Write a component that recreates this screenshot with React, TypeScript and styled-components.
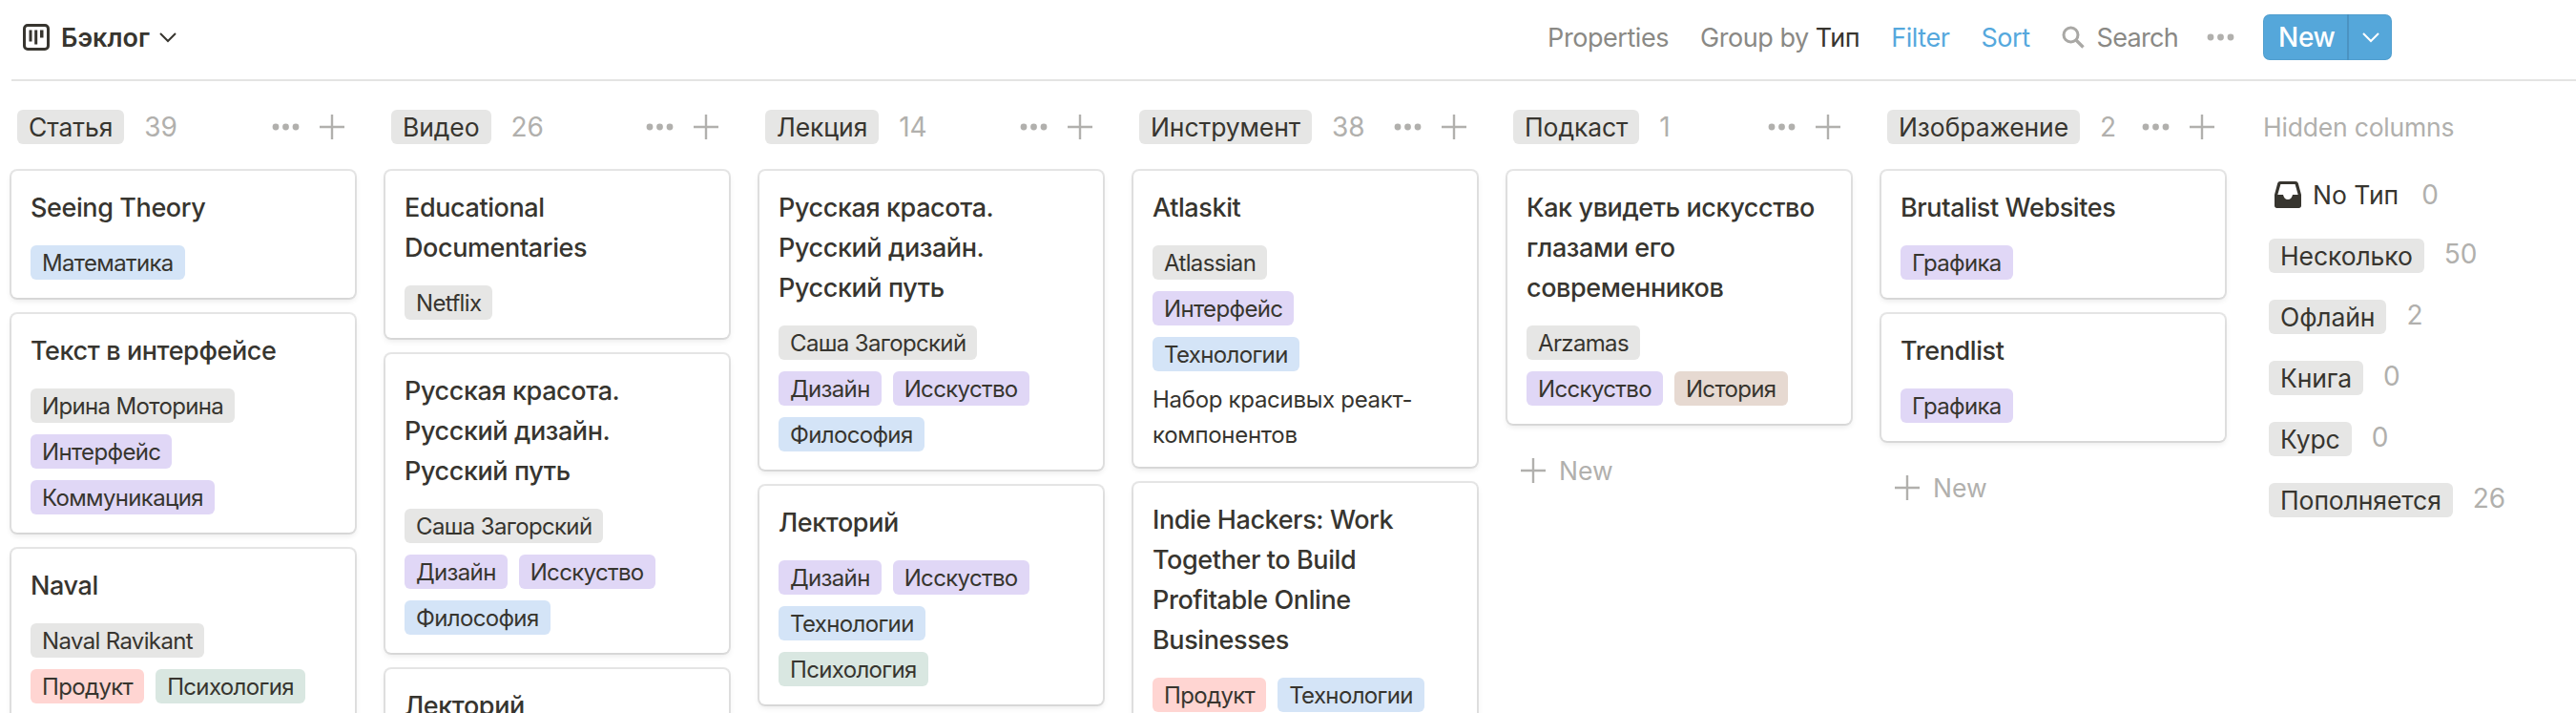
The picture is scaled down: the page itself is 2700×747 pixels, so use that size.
import React from "react";
import styled, { createGlobalStyle } from "styled-components";

const GlobalStyle = createGlobalStyle`
  html, body {
    margin: 0;
    padding: 0;
    height: 747px;
    overflow: hidden;
    background: #ffffff;
  }
  body {
    font-family: "Inter", "Noto Sans", sans-serif;
    color: #37352f;
  }
`;

const TONES = {
  gray: "#e6e6e5",
  purple: "#e0d7f6",
  blue: "#d4e4f7",
  red: "#ffd5d2",
  green: "#d9e7e1",
  brown: "#e6d9d1",
};

type Tone = keyof typeof TONES;
type TagData = [string, Tone];

interface CardData {
  title: string;
  author?: string;
  tags: TagData[];
  desc?: string;
}

interface ColumnData {
  name: string;
  count: number;
  cards: CardData[];
  addNew?: boolean;
}

const russianDesign: CardData = {
  title: "Русская красота. Русский дизайн. Русский путь",
  author: "Саша Загорский",
  tags: [
    ["Дизайн", "purple"],
    ["Исскуство", "purple"],
    ["Философия", "blue"],
  ],
};

const lectorium: CardData = {
  title: "Лекторий",
  tags: [
    ["Дизайн", "purple"],
    ["Исскуство", "purple"],
    ["Технологии", "blue"],
    ["Психология", "green"],
  ],
};

const columns: ColumnData[] = [
  {
    name: "Статья",
    count: 39,
    cards: [
      { title: "Seeing Theory", tags: [["Математика", "blue"]] },
      {
        title: "Текст в интерфейсе",
        author: "Ирина Моторина",
        tags: [
          ["Интерфейс", "purple"],
          ["Коммуникация", "purple"],
        ],
      },
      {
        title: "Naval",
        author: "Naval Ravikant",
        tags: [
          ["Продукт", "red"],
          ["Психология", "green"],
        ],
      },
    ],
  },
  {
    name: "Видео",
    count: 26,
    cards: [
      { title: "Educational Documentaries", author: "Netflix", tags: [] },
      russianDesign,
      lectorium,
    ],
  },
  {
    name: "Лекция",
    count: 14,
    cards: [russianDesign, lectorium],
  },
  {
    name: "Инструмент",
    count: 38,
    cards: [
      {
        title: "Atlaskit",
        author: "Atlassian",
        tags: [
          ["Интерфейс", "purple"],
          ["Технологии", "blue"],
        ],
        desc: "Набор красивых реакт-компонентов",
      },
      {
        title: "Indie Hackers: Work Together to Build Profitable Online Businesses",
        tags: [
          ["Продукт", "red"],
          ["Технологии", "blue"],
        ],
      },
    ],
  },
  {
    name: "Подкаст",
    count: 1,
    addNew: true,
    cards: [
      {
        title: "Как увидеть искусство глазами его современников",
        author: "Arzamas",
        tags: [
          ["Исскуство", "purple"],
          ["История", "brown"],
        ],
      },
    ],
  },
  {
    name: "Изображение",
    count: 2,
    addNew: true,
    cards: [
      { title: "Brutalist Websites", tags: [["Графика", "purple"]] },
      { title: "Trendlist", tags: [["Графика", "purple"]] },
    ],
  },
];

const hiddenGroups: [string, number][] = [
  ["Несколько", 50],
  ["Офлайн", 2],
  ["Книга", 0],
  ["Курс", 0],
  ["Пополняется", 26],
];

const Page = styled.div`
  width: 2700px;
  height: 747px;
  overflow: hidden;
`;

const Toolbar = styled.header`
  display: flex;
  align-items: center;
  justify-content: space-between;
  box-sizing: border-box;
  height: 85px;
  margin-left: 12px;
  padding: 0 193px 5px 12px;
  border-bottom: 2px solid #e4e4e3;
  font-size: 27px;
`;

const ViewTitle = styled.div`
  display: flex;
  align-items: center;
  font-weight: 600;
`;

const ViewName = styled.span`
  margin: 0 10px 0 12px;
`;

const ToolGroup = styled.div`
  display: flex;
  align-items: center;
`;

const ToolLink = styled.span<{ $blue?: boolean }>`
  margin-right: 33px;
  color: ${(p) => (p.$blue ? "#55a8dd" : "#8a8985")};
  letter-spacing: -0.45px;
`;

const ToolValue = styled.span`
  color: #37352f;
`;

const SearchBox = styled.span`
  display: flex;
  align-items: center;
  gap: 13px;
  margin-right: 30px;
  color: #8a8985;
  letter-spacing: -0.7px;
`;

const NewButton = styled.div`
  display: flex;
  height: 48px;
  margin-left: 30px;
  border-radius: 7px;
  background: #55a7da;
  color: #ffffff;
  box-shadow: inset 0 0 0 1px rgba(15, 15, 15, 0.06);
`;

const NewLabel = styled.span`
  display: flex;
  align-items: center;
  box-sizing: border-box;
  width: 90px;
  padding-left: 16px;
  font-size: 28px;
  font-weight: 500;
  letter-spacing: -0.3px;
  border-right: 2px solid #4b93c2;
`;

const NewArrow = styled.span`
  display: flex;
  align-items: center;
  justify-content: center;
  width: 45px;
`;

const Board = styled.main`
  display: flex;
  gap: 32px;
  padding: 30px 0 0 12px;
`;

const Column = styled.section`
  flex: none;
  width: 360px;
`;

const ColumnHead = styled.div`
  display: flex;
  align-items: center;
  height: 36px;
  margin-bottom: 28px;
  padding: 0 11px 0 6px;
`;

const GroupTag = styled.span`
  display: inline-flex;
  align-items: center;
  height: 36px;
  padding: 0 12px;
  border-radius: 6px;
  background: ${TONES.gray};
  font-size: 26.5px;
  letter-spacing: -0.1px;
  white-space: nowrap;
`;

const Count = styled.span`
  margin-left: 21px;
  font-size: 28px;
  color: #b1b0ad;
`;

const HiddenCount = styled(Count)`
  margin-bottom: 4px;
`;

const HeadActions = styled.div`
  display: flex;
  align-items: center;
  gap: 21px;
  margin-left: auto;
`;

const CardStack = styled.div`
  display: flex;
  flex-direction: column;
  gap: 17px;
`;

const Card = styled.article`
  padding: 18px 20px 19px;
  border-radius: 6px;
  background: #ffffff;
  box-shadow: 0 0 0 2px rgba(15, 15, 15, 0.1), 0 3px 6px rgba(15, 15, 15, 0.1);
`;

const CardTitle = styled.div`
  font-size: 27px;
  font-weight: 500;
  line-height: 42px;
  letter-spacing: -0.4px;
`;

const CardProps = styled.div`
  margin: 18px 0 -12px;
`;

const TagRow = styled.div`
  display: flex;
  flex-wrap: wrap;
`;

const Tag = styled.span<{ $tone: Tone }>`
  display: inline-flex;
  align-items: center;
  height: 36px;
  margin: 0 12px 12px 0;
  padding: 0 12px;
  border-radius: 6px;
  background: ${(p) => TONES[p.$tone]};
  font-size: 24px;
  letter-spacing: -0.65px;
  white-space: nowrap;
`;

const CardDesc = styled.div`
  margin: 11px 0 -4px;
  font-size: 24px;
  line-height: 37px;
  letter-spacing: -0.3px;
`;

const AddNew = styled.div`
  display: flex;
  align-items: center;
  gap: 14px;
  height: 36px;
  margin-top: 31px;
  padding-left: 14px;
  font-size: 26.5px;
  color: #b1b0ad;
`;

const HiddenColumn = styled.aside`
  flex: none;
  margin-left: 8px;
`;

const HiddenTitle = styled.div`
  height: 36px;
  line-height: 36px;
  margin-bottom: 20px;
  font-size: 26.5px;
  letter-spacing: -0.2px;
  color: #b1b0ad;
`;

const HiddenRow = styled.div`
  display: flex;
  align-items: center;
  height: 64px;
  padding-left: 6px;
`;

const NoGroup = styled(HiddenRow)`
  height: 65px;
  padding-left: 12px;
  gap: 12px;
  font-size: 26.5px;
`;

const NoGroupCount = styled(Count)`
  margin-left: 12px;
`;

const BoardIcon = () => (
  <svg width="28" height="28" viewBox="0 0 28 28" fill="none">
    <rect x="1.5" y="1.5" width="25" height="25" rx="3.5" stroke="#37352f" strokeWidth="3" />
    <path d="M6.5 6.5h3v12h-3zM12.2 6.500h3v15h-3zM18 6.500h3.500v8H18z" fill="#37352f" />
  </svg>
);

const Chevron = ({ color = "#37352f" }: { color?: string }) => (
  <svg width="18" height="11" viewBox="0 0 18 11" fill="none">
    <path d="M1 1l8 8 8-8" stroke={color} strokeWidth="2" />
  </svg>
);

const SearchIcon = () => (
  <svg width="24" height="24" viewBox="0 0 24 24" fill="none">
    <circle cx="9.5" cy="9.5" r="7.5" stroke="#a9a8a5" strokeWidth="3" />
    <path d="M15 15l7.500 7.500" stroke="#a9a8a5" strokeWidth="3.400" />
  </svg>
);

const Dots = () => (
  <svg width="29" height="8" viewBox="0 0 29 8" fill="#b1b0ad">
    <circle cx="4" cy="4" r="3.4" />
    <circle cx="14.5" cy="4" r="3.4" />
    <circle cx="25" cy="4" r="3.4" />
  </svg>
);

const Plus = () => (
  <svg width="26" height="26" viewBox="0 0 26 26" stroke="#b1b0ad" strokeWidth="2.4">
    <path d="M13 0v26M0 13h26" />
  </svg>
);

const InboxIcon = () => (
  <svg width="28" height="28" viewBox="0 0 28 28">
    <path
      fill="#37352f"
      fillRule="evenodd"
      d="M6 0h16c1.400 0 2.300.8 2.800 2L28 14v11.500c0 1.400-1 2.500-2.500 2.500h-23C1 28 0 26.900 0 25.500V14L3.200 2C3.700.8 4.600 0 6 0zm.4 3L3.300 14H9c.6 3 2.500 5 5 5s4.400-2 5-5h5.700L21.600 3H6.400z"
    />
  </svg>
);

const BoardCard = ({ card }: { card: CardData }) => (
  <Card>
    <CardTitle>{card.title}</CardTitle>
    <CardProps>
      {card.author && (
        <TagRow>
          <Tag $tone="gray">{card.author}</Tag>
        </TagRow>
      )}
      {card.tags.length > 0 && (
        <TagRow>
          {card.tags.map(([label, tone]) => (
            <Tag key={label} $tone={tone}>
              {label}
            </Tag>
          ))}
        </TagRow>
      )}
    </CardProps>
    {card.desc && <CardDesc>{card.desc}</CardDesc>}
  </Card>
);

export default function App() {
  return (
    <Page>
      <GlobalStyle />
      <Toolbar>
        <ViewTitle>
          <BoardIcon />
          <ViewName>Бэклог</ViewName>
          <Chevron />
        </ViewTitle>
        <ToolGroup>
          <ToolLink>Properties</ToolLink>
          <ToolLink>
            Group by <ToolValue>Тип</ToolValue>
          </ToolLink>
          <ToolLink $blue>Filter</ToolLink>
          <ToolLink $blue>Sort</ToolLink>
          <SearchBox>
            <SearchIcon />
            Search
          </SearchBox>
          <Dots />
          <NewButton>
            <NewLabel>New</NewLabel>
            <NewArrow>
              <Chevron color="#ffffff" />
            </NewArrow>
          </NewButton>
        </ToolGroup>
      </Toolbar>
      <Board>
        {columns.map((column) => (
          <Column key={column.name}>
            <ColumnHead>
              <GroupTag>{column.name}</GroupTag>
              <Count>{column.count}</Count>
              <HeadActions>
                <Dots />
                <Plus />
              </HeadActions>
            </ColumnHead>
            <CardStack>
              {column.cards.map((card) => (
                <BoardCard key={card.title} card={card} />
              ))}
            </CardStack>
            {column.addNew && (
              <AddNew>
                <Plus />
                New
              </AddNew>
            )}
          </Column>
        ))}
        <HiddenColumn>
          <HiddenTitle>Hidden columns</HiddenTitle>
          <NoGroup>
            <InboxIcon />
            No Тип
            <NoGroupCount>0</NoGroupCount>
          </NoGroup>
          {hiddenGroups.map(([name, count]) => (
            <HiddenRow key={name}>
              <GroupTag>{name}</GroupTag>
              <HiddenCount>{count}</HiddenCount>
            </HiddenRow>
          ))}
        </HiddenColumn>
      </Board>
    </Page>
  );
}
